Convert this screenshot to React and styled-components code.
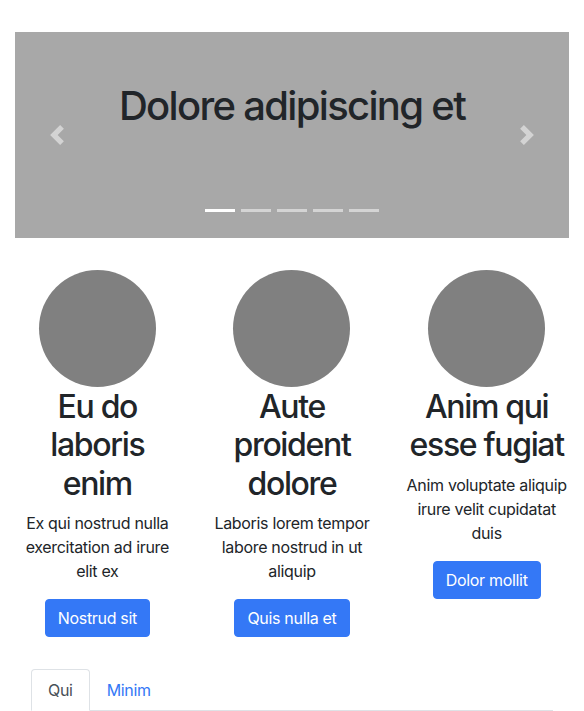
import React from "react";
import styled, { createGlobalStyle } from "styled-components";

const Global = createGlobalStyle`
  html, body { margin: 0; padding: 0; background: #fff; }
  body {
    font-family: Inter, "Liberation Sans", Arial, sans-serif;
    font-size: 16px;
    line-height: 1.5;
    color: #212529;
    letter-spacing: -0.02em;
  }
  * { box-sizing: border-box; }
`;

const Page = styled.div`
  padding-top: 32px;
  width: 584px;
  overflow: hidden;
`;

const Container = styled.div`
  padding: 0 15px;
`;

const Carousel = styled.div`
  position: relative;
  height: 206px;
  background: #a8a8a8;
  margin-bottom: 32px;
`;

const Slide = styled.div`
  padding-top: 50px;
  text-align: center;
`;

const Title = styled.h1`
  margin: 0;
  font-size: 40px;
  line-height: 1.2;
  font-weight: 500;
  letter-spacing: -0.042em;
  color: #212529;
`;

const Control = styled.button`
  position: absolute;
  top: 0;
  bottom: 0;
  ${(p) => (p.$side === "left" ? "left: 0;" : "right: 0;")}
  width: 15%;
  display: flex;
  align-items: center;
  justify-content: center;
  background: none;
  border: 0;
  padding: 0;
  opacity: 0.5;
  cursor: pointer;
`;

const Indicators = styled.ol`
  position: absolute;
  left: 0;
  right: 0;
  bottom: 16px;
  margin: 0;
  padding: 0;
  list-style: none;
  display: flex;
  justify-content: center;
`;

const Indicator = styled.li`
  width: 30px;
  height: 3px;
  margin: 10px 3px;
  background: #fff;
  opacity: ${(p) => (p.$active ? 1 : 0.5)};
`;

const Row = styled.div`
  display: grid;
  grid-template-columns: repeat(3, 1fr);
  margin-bottom: 16px;
`;

const Col = styled.div`
  padding: 0 15px;
  text-align: center;
`;

const Circle = styled.div`
  width: 117px;
  height: 117px;
  margin: 0 auto 1px;
  border-radius: 50%;
  background: #808080;
`;

const Heading = styled.h2`
  margin: 0 0 8px;
  font-size: 32px;
  line-height: 1.2;
  font-weight: 500;
  letter-spacing: -0.042em;
  color: #212529;
`;

const Text = styled.p`
  margin: 0 0 16px;
  font-size: 16px;
  line-height: 24px;
`;

const Button = styled.a`
  display: inline-block;
  padding: 6px 12px;
  border: 1px solid #3478f6;
  border-radius: 4px;
  background: #3478f6;
  color: #fff;
  font-size: 16px;
  line-height: 24px;
  text-decoration: none;
`;

const Tabs = styled.ul`
  display: flex;
  margin: 0 16px;
  padding: 0;
  list-style: none;
  border-bottom: 1px solid #dee2e6;
`;

const Tab = styled.li`
  margin-bottom: -1px;
  padding: 8px 16px;
  border: 1px solid transparent;
  border-radius: 4px 4px 0 0;
  font-size: 16px;
  line-height: 24px;
  color: ${(p) => (p.$active ? "#495057" : "#3478f6")};
  ${(p) => p.$active && "border-color: #dee2e6 #dee2e6 #fff; background: #fff;"}
`;

const Chevron = ({ dir }) => (
  <svg width="20" height="20" viewBox="0 0 8 8" fill="#fff">
    {dir === "left" ? (
      <path d="M5.25 0l-4 4 4 4 1.5-1.5L4.25 4l2.5-2.5L5.25 0z" />
    ) : (
      <path d="M2.75 0l-1.5 1.5L3.75 4l-2.5 2.5L2.75 8l4-4-4-4z" />
    )}
  </svg>
);

const cols = [
  {
    h: "Eu do laboris enim",
    p: "Ex qui nostrud nulla exercitation ad irure elit ex",
    b: "Nostrud sit",
  },
  {
    h: "Aute proident dolore",
    p: "Laboris lorem tempor labore nostrud in ut aliquip",
    b: "Quis nulla et",
  },
  {
    h: "Anim qui esse fugiat",
    p: "Anim voluptate aliquip irure velit cupidatat duis",
    b: "Dolor mollit",
  },
];

export default function App() {
  return (
    <Page>
      <Global />
      <Container>
        <Carousel>
          <Slide>
            <Title>Dolore adipiscing et</Title>
          </Slide>
          <Control $side="left" aria-label="Previous">
            <Chevron dir="left" />
          </Control>
          <Control $side="right" aria-label="Next">
            <Chevron dir="right" />
          </Control>
          <Indicators>
            {[0, 1, 2, 3, 4].map((i) => (
              <Indicator key={i} $active={i === 0} />
            ))}
          </Indicators>
        </Carousel>
      </Container>
      <Row>
        {cols.map((c) => (
          <Col key={c.b}>
            <Circle />
            <Heading>{c.h}</Heading>
            <Text>{c.p}</Text>
            <Text>
              <Button href="#">{c.b}</Button>
            </Text>
          </Col>
        ))}
      </Row>
      <Container>
        <Tabs>
          <Tab $active>Qui</Tab>
          <Tab>Minim</Tab>
        </Tabs>
      </Container>
    </Page>
  );
}
